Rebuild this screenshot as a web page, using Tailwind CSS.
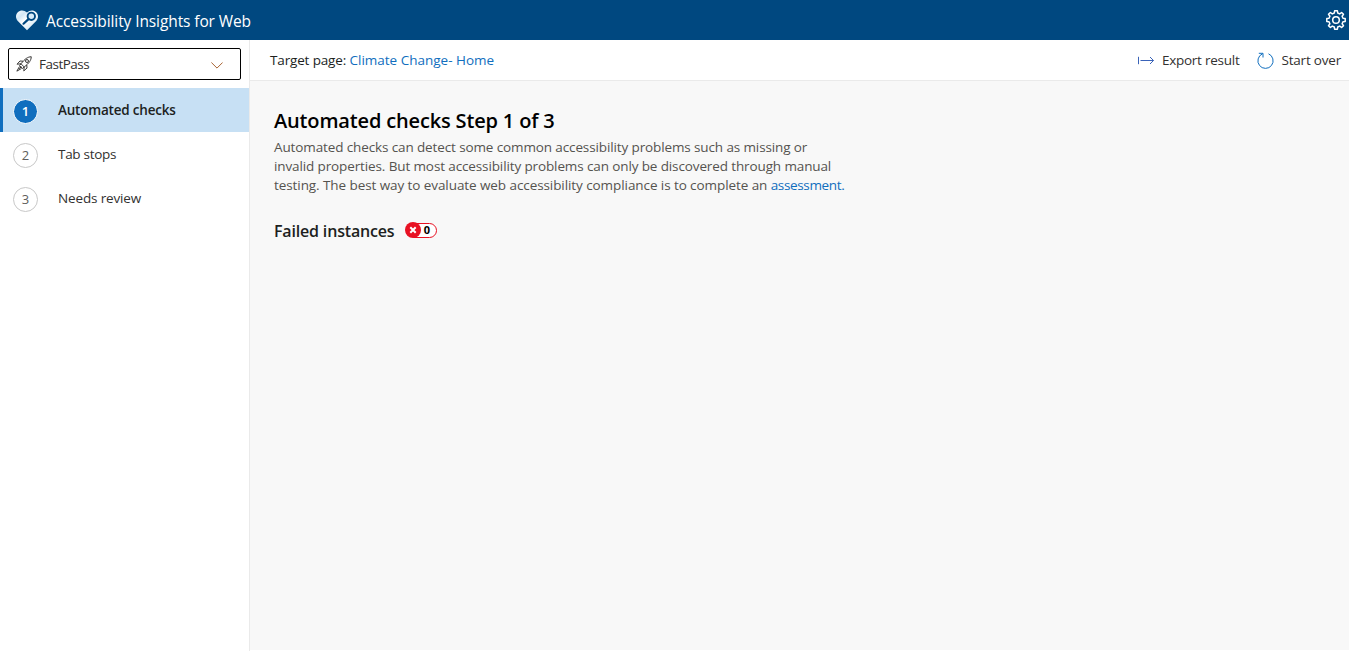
<!DOCTYPE html>
<html lang="en">
<head>
<meta charset="utf-8">
<title>Accessibility Insights for Web</title>
<script src="https://cdn.jsdelivr.net/npm/@tailwindcss/browser@4"></script>
</head>
<body class="h-[651px] w-[1349px] overflow-hidden bg-white font-['Open_Sans','Noto_Sans',sans-serif] text-[13.5px] text-[#323130]">
<header class="flex h-10 items-center bg-[#004880] pl-4 pr-[3px] text-white">
  <svg class="mt-px h-[21px] w-[22px] shrink-0" viewBox="0 0 22 21">
    <defs><linearGradient id="h" x1="0" y1="0" x2="1" y2="1"><stop offset="0" stop-color="#fff"/><stop offset=".25" stop-color="#d3e7f6"/><stop offset=".45" stop-color="#fff"/><stop offset="1" stop-color="#c5e0f2"/></linearGradient></defs>
    <path fill="url(#h)" d="M11 20.2 1.8 11C-.6 8.500-.6 4.500 1.800 2.200 4.300-.2 8.300-.2 11 2.500c2.700-2.700 6.700-2.700 9.200-.3 2.400 2.300 2.400 6.300 0 8.800Z"/>
    <circle cx="15.300" cy="6.300" r="3.700" fill="#d9ebf8" stroke="#004880" stroke-width="1.900"/>
    <path d="m12.500 9.100-5 4.600" stroke="#004880" stroke-width="2.200" stroke-linecap="round"/>
  </svg>
  <span class="ml-2 mt-[2px] whitespace-nowrap text-[15.500px] leading-5 tracking-[-.1px]">Accessibility Insights for Web</span>
  <svg class="ml-auto h-5 w-5 shrink-0" viewBox="0 0 20 20" fill="none" stroke="#fff" stroke-width="1.500" stroke-linejoin="round">
    <path d="M8.300 3 8.600.8h2.800l.3 2.200 2 .9 1.900-1.400 1.900 1.900-1.400 1.900.9 2 2.200.3v2.800l-2.200.3-.9 2 1.400 1.900-1.900 1.900-1.900-1.400-2 .9-.3 2.200H8.600L8.300 17l-2-.9-1.900 1.400-1.900-1.900 1.400-1.900-.9-2-2.200-.3V8.600L3 8.300l.9-2-1.400-1.900 1.900-1.900 1.900 1.400Z"/>
    <circle cx="10" cy="10" r="3.300"/>
  </svg>
</header>
<div class="flex h-[611px]">
  <nav class="w-[250px] shrink-0 border-r border-[#eaeaea] bg-white">
    <div class="mx-2 mt-2 flex h-8 items-center rounded-xs border border-black pl-[7px] pr-[17px]">
      <svg class="h-4 w-4 shrink-0" viewBox="0 0 15 15" fill="none" stroke="#323130" stroke-width=".9" stroke-linejoin="round">
        <path d="M14.300.7C11 .8 8.500 2.500 4.700 7.300l3 3C12.500 6.500 14.200 4 14.300.7ZM6.700 4.900 3.700 4.700 1 7.700l3.700-.4M10.100 8.300l.2 3L7.300 14l.4-3.700M4.700 7.300 3.300 9l2.700 2.700 1.700-1.400M3.300 9.800.8 14.200 5.200 11.700M3 12l2-2"/><circle cx="10.300" cy="4.700" r="1.400"/>
      </svg>
      <span class="ml-[7px] tracking-[-.5px]">FastPass</span>
      <svg class="ml-auto mt-[3px] h-[7px] w-3" viewBox="0 0 12 7" fill="none" stroke="#a86433" stroke-width="1"><path d="m.4.5 5.600 5.600L11.600.5"/></svg>
    </div>
    <ul class="mt-2">
      <li class="flex h-11 items-center border-l-[3px] border-[#106ebe] bg-[#c7e0f4] pl-2.5 font-semibold text-[#201f1e]">
        <span class="mt-[3px] flex h-[25px] w-[25px] items-center justify-center rounded-full border border-white bg-[#106ebe] pt-px text-[13px] text-white">1</span>
        <span class="ml-5 tracking-[-.2px]">Automated checks</span>
      </li>
      <li class="flex h-11 items-center pl-[13px]">
        <span class="mt-[3px] flex h-[25px] w-[25px] items-center justify-center rounded-full border border-[#c8c8c8] pt-px text-[13px] text-[#605e5c]">2</span>
        <span class="ml-5 tracking-[-.3px]">Tab stops</span>
      </li>
      <li class="flex h-11 items-center pl-[13px]">
        <span class="mt-[3px] flex h-[25px] w-[25px] items-center justify-center rounded-full border border-[#c8c8c8] pt-px text-[13px] text-[#605e5c]">3</span>
        <span class="ml-5 tracking-[-.15px]">Needs review</span>
      </li>
    </ul>
  </nav>
  <div class="flex min-w-0 flex-1 flex-col">
    <div class="flex h-[41px] shrink-0 items-center border-b border-[#eaeaea] bg-white pl-5 pr-2">
      <p class="whitespace-nowrap text-[#201f1e]"><span class="tracking-[-.15px]">Target page: </span><a class="text-[#106ebe]">Climate Change- Home</a></p>
      <div class="ml-auto flex items-center">
        <svg class="h-[9px] w-4" viewBox="0 0 16 9" fill="none" stroke="#3a63b8"><path d="M.5.800v7.400M2.500 4.500h13M12 1l3.500 3.500L12 8"/></svg>
        <span class="ml-2 tracking-[-.25px]">Export result</span>
        <svg class="ml-[18px] h-[17px] w-[17px]" viewBox="0 0 17 17" fill="none" stroke="#106ebe"><path d="M11.500 1.800A7.600 7.600 0 1 1 5.500 1.800M1.800 1.300h4.200v4.200"/></svg>
        <span class="ml-[7px] tracking-[-.2px]">Start over</span>
      </div>
    </div>
    <main class="mb-px flex-1 bg-[#f8f8f8] pl-6 pt-[25px]">
      <h1 class="text-[20px] font-semibold leading-[30px] tracking-[-.16px] text-black">Automated checks Step 1 of 3</h1>
      <p class="mt-0.5 whitespace-nowrap leading-[19px] tracking-[-.12px] text-[#55534f]">Automated checks can detect some common accessibility problems such as missing or<br>invalid properties. But most accessibility problems can only be discovered through manual<br><span class="tracking-[-.08px]">testing. The best way to evaluate web accessibility compliance is to complete an </span><a class="tracking-[-.35px] text-[#106ebe]">assessment</a><span class="text-[#106ebe]">.</span></p>
      <div class="mt-6 flex h-6 items-center">
        <h2 class="w-[121px] whitespace-nowrap text-[16px] font-semibold tracking-[-.17px] text-[#201f1e]">Failed instances</h2>
        <span class="mb-0.5 ml-2.5 flex h-4 w-8 items-center">
          <svg class="z-10 h-4 w-4 shrink-0" viewBox="0 0 16 16"><circle cx="8" cy="8" r="8" fill="#e81123"/><path d="m5.300 5.300 5.400 5.400m0-5.400-5.400 5.400" stroke="#fff" stroke-width="2"/></svg>
          <span class="-ml-2 flex h-[15px] w-6 items-center justify-center rounded-r-full border border-[#e81123] bg-white pl-1 text-[11px] font-bold text-black">0</span>
        </span>
      </div>
    </main>
  </div>
</div>
</body>
</html>
